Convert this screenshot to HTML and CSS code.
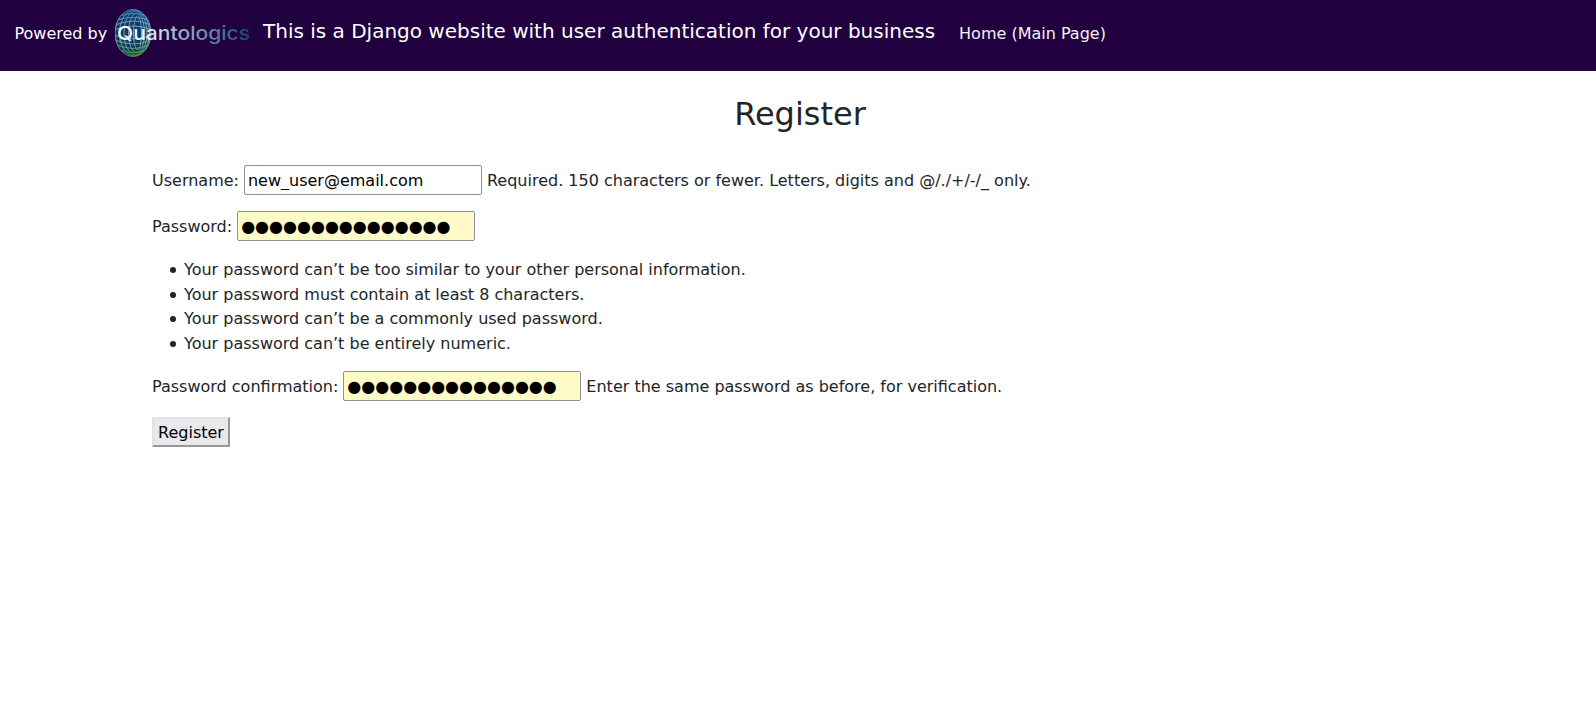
FILE: index.html
```html
<!DOCTYPE html>
<html lang="en">
<head>
<meta charset="utf-8">
<title>Register</title>
<link rel="stylesheet" href="styles.css">
</head>
<body>
<nav class="navbar">
  <span class="powered">Powered by</span>
  <svg class="logo" width="136" height="50" viewBox="0 0 136 50" role="img" aria-label="Quantologics">
    <defs>
      <linearGradient id="globe" x1="0" y1="1" x2="0" y2="48" gradientUnits="userSpaceOnUse">
        <stop offset="0" stop-color="#3f82c8"/><stop offset=".3" stop-color="#7fa9c9"/><stop offset=".6" stop-color="#8fbcae"/><stop offset="1" stop-color="#4f9a3c"/>
      </linearGradient>
      <linearGradient id="word" x1="4" y1="0" x2="135" y2="0" gradientUnits="userSpaceOnUse">
        <stop offset="0" stop-color="#fff"/><stop offset=".2" stop-color="#eef2f6"/><stop offset=".45" stop-color="#9fb4c6"/><stop offset=".75" stop-color="#5b7c9f"/><stop offset="1" stop-color="#0f4273"/>
      </linearGradient>
    </defs>
    <ellipse cx="18" cy="24" rx="18" ry="23.5" fill="#0d3b66"/>
    <g fill="none" stroke="url(#globe)" stroke-width=".9" transform="translate(-.5 -.5)">
      <ellipse cx="18.5" cy="24.5" rx="18" ry="23.5"/>
      <ellipse cx="20" cy="24.5" rx="15" ry="23"/>
      <ellipse cx="21" cy="24.5" rx="11.5" ry="22"/>
      <ellipse cx="22" cy="24.5" rx="8" ry="20"/>
      <ellipse cx="23" cy="24.5" rx="4" ry="17"/>
      <path d="M7 7Q19 3 30 7M4 11Q19 7 33 11M2 16Q20 9 35 16M1 21Q20 14 36 21M1 27Q20 34 36 27M2 32Q20 39 35 32M4 37Q20 43 33 37M7 42Q19 46 30 42"/>
    </g>
    <text class="wordmark" x="2" y="31" textLength="133" lengthAdjust="spacingAndGlyphs" fill="url(#word)">Quantologics</text>
  </svg>
  <span class="brand">This is a Django website with user authentication for your business</span>
  <a class="home">Home (Main Page)</a>
</nav>
<main class="container">
  <h2 class="title">Register</h2>
  <form class="form">
    <p class="row"><label for="user">Username:</label> <input class="field" id="user" type="text" value="new_user@email.com"> <span>Required. 150 characters or fewer. Letters, digits and @/./+/-/_ only.</span></p>
    <p class="row"><label>Password:</label> <span class="field filled">●●●●●●●●●●●●●●●</span></p>
    <ul class="rules">
      <li>Your password can’t be too similar to your other personal information.</li>
      <li>Your password must contain at least 8 characters.</li>
      <li>Your password can’t be a commonly used password.</li>
      <li>Your password can’t be entirely numeric.</li>
    </ul>
    <p class="row"><label>Password confirmation:</label> <span class="field filled">●●●●●●●●●●●●●●●</span> <span>Enter the same password as before, for verification.</span></p>
    <button class="submit" type="button">Register</button>
  </form>
</main>
</body>
</html>
```
FILE: styles.css
```css
* { box-sizing: border-box; }
body { margin: 0; background: #fff; color: #212529; font: 16px/24.5px "DejaVu Sans", sans-serif; }
.navbar { display: flex; align-items: center; height: 71px; padding: 0 14px 4px; background: #210040; color: #fff; }
.powered { width: 100px; padding: 2px 0 0 .5px; white-space: nowrap; }
.logo { flex: none; margin-left: .5px; }
.wordmark { font: 500 18.5px Inter, sans-serif; }
.brand { margin-left: 12.5px; font-size: 20px; line-height: 30px; white-space: nowrap; margin-top: -6px; }
.home { margin-left: 24px; padding-top: 2px; color: #fff; opacity: .95; }
.container { padding: 24px 0 0 152px; }
.title { width: 1296px; margin: 0 0 31px; font-size: 32px; line-height: 39px; font-weight: 400; text-align: center; }
.row { display: flex; align-items: center; gap: 5px; height: 30px; margin: 0 0 16px; }
.row > label, .row > span:last-child:not(.field) { padding-top: 2px; }
.field { width: 238px; height: 30px; padding: 0 3px; border: 1px solid #8f8f9d; border-radius: 2px; background: #fff; color: #000; font: 16px/28px "DejaVu Sans", sans-serif; }
.filled { line-height: 30px; background: #fffbc8; white-space: nowrap; }
.rules { margin: 0 0 16px; padding: 1px 0 0 32px; height: 98px; list-style: none; }
.rules li { display: flex; align-items: center; }
.rules li::before { content: ""; width: 6px; height: 6px; margin: 0 8px 0 -14px; border-radius: 50%; background: #212529; }
.submit { display: block; width: 78px; height: 30px; padding: 1px 0 0; border: 2px solid; border-color: #e3e3e3 #979797 #979797 #e3e3e3; background: #e9e9ed; color: #000; font: 16px/25px "DejaVu Sans", sans-serif; }
```
